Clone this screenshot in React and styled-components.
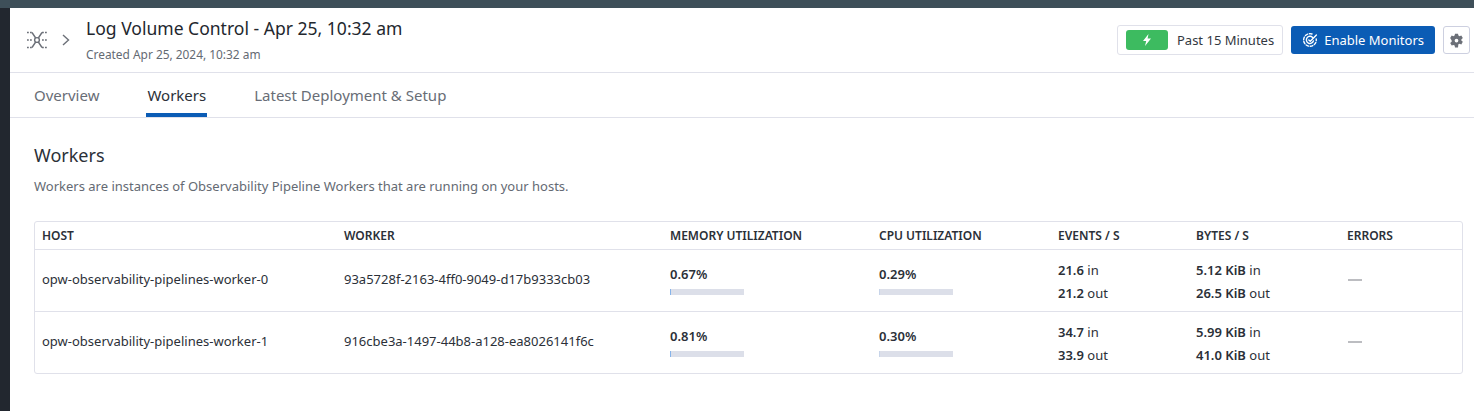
import React from 'react';
import styled, { createGlobalStyle } from 'styled-components';

const GlobalStyle = createGlobalStyle`
   html, body {
      margin: 0;
      padding: 0;
      height: 100%;
      background: #fff;
   }
   body {
      font-family: "Noto Sans", "Open Sans", sans-serif;
      color: #2b3038;
      overflow: hidden;
   }
`;

const Shell = styled.div`
   display: flex;
   flex-direction: column;
   height: 411px;
   border-top: 8px solid #3e4f59;
   box-sizing: border-box;
`;

const Body = styled.div`
   display: flex;
   flex: 1;
`;

const Rail = styled.div`
   width: 10px;
   background: #22272f;
`;

const Main = styled.div`
   flex: 1;
   display: flex;
   flex-direction: column;
   min-width: 0;
`;

const Header = styled.header`
   display: flex;
   align-items: center;
   height: 65px;
   box-sizing: border-box;
   padding: 0 4px 0 16px;
   border-bottom: 1px solid #e0e1ea;
`;

const Crumb = styled.div`
   display: flex;
   align-items: center;
   gap: 14px;
   margin-right: 16px;
   color: #6c7078;
`;

const Titles = styled.div`
   flex: 1;
   padding-bottom: 4px;
`;

const Title = styled.h1`
   margin: 0;
   font-size: 17.55px;
   line-height: 26px;
   font-weight: 400;
   color: #23272e;
`;

const Sub = styled.div`
   margin-top: 5px;
   font-size: 11.9px;
   line-height: 16px;
   color: #646a73;
`;

const Actions = styled.div`
   display: flex;
   align-items: center;
`;

const TimePicker = styled.div`
   display: flex;
   align-items: center;
   height: 30px;
   box-sizing: border-box;
   padding: 0 8px;
   border: 1px solid #e0e1ea;
   border-radius: 3px;
   font-size: 13px;
   color: #33383f;
`;

const LivePill = styled.div`
   display: flex;
   align-items: center;
   justify-content: center;
   width: 42px;
   height: 20px;
   margin-right: 9px;
   border-radius: 3px;
   background: #3dbb60;
`;

const PrimaryButton = styled.button`
   display: flex;
   align-items: center;
   gap: 6px;
   height: 28px;
   margin-left: 8px;
   padding: 0 11px;
   border: 0;
   border-radius: 3px;
   background: #0b5cb5;
   color: #fff;
   font: inherit;
   font-size: 13px;
`;

const IconButton = styled.button`
   display: flex;
   align-items: center;
   justify-content: center;
   width: 27px;
   height: 28px;
   margin-left: 8px;
   padding: 0;
   border: 1px solid #cdd0e0;
   border-radius: 3px;
   background: #fff;
   color: #6c7078;
`;

const Tabs = styled.nav`
   display: flex;
   height: 45px;
   box-sizing: border-box;
   padding-left: 23px;
   gap: 46px;
   border-bottom: 1px solid #e0e1ea;
`;

const Tab = styled.div`
   box-sizing: border-box;
   height: 44px;
   padding: 0 1px;
   font-size: 15px;
   line-height: 44px;
   color: ${props => (props.$active ? '#2b3038' : '#686d76')};
   border-bottom: 4px solid ${props => (props.$active ? '#0b5cb5' : 'transparent')};
`;

const Content = styled.section`
   padding: 26px 11px 0 24px;
`;

const Heading = styled.h2`
   margin: 0;
   font-size: 18px;
   line-height: 22px;
   font-weight: 400;
   color: #2b3038;
`;

const Blurb = styled.p`
   margin: 12px 0 0;
   font-size: 13px;
   line-height: 17px;
   color: #646a73;
`;

const Table = styled.div`
   display: grid;
   grid-template-columns: 302px 326px 209px 179px 138px 151px 1fr;
   margin-top: 26px;
   border: 1px solid #e0e1ea;
   border-radius: 3px;
`;

const HeadCell = styled.div`
   display: flex;
   align-items: center;
   height: 27px;
   padding-left: 7px;
   border-bottom: 1px solid #e0e1ea;
   font-size: 12px;
   font-weight: 600;
   color: #2b3038;
`;

const Cell = styled.div`
   display: flex;
   flex-direction: column;
   justify-content: center;
   box-sizing: border-box;
   height: ${props => (props.$last ? '61px' : '62px')};
   padding: ${props => props.$pad || '0'} 0 ${props => props.$padBottom || '0'} 7px;
   font-size: 13px;
   color: #2b3038;
   border-bottom: ${props => (props.$last ? '0' : '1px solid #e0e1ea')};
`;

const Percent = styled.div`
   font-size: 13px;
   line-height: 17px;
   font-weight: 600;
`;

const Track = styled.div`
   width: 74px;
   height: 6px;
   margin-top: 6px;
   background: #dcdfe9;
`;

const Fill = styled.div`
   height: 100%;
   background: #86b4ea;
`;

const Rate = styled.div`
   font-size: 13px;
   line-height: 23px;

   b {
      font-weight: 600;
   }
`;

const Dash = styled.div`
   width: 14px;
   height: 2px;
   margin-left: 1px;
   background: #bcbdc1;
`;

function PipelineIcon() {
   return (
      <svg width="22" height="20" viewBox="0 0 22 20" fill="none" stroke="currentColor" strokeWidth="1.6">
         <path d="M1 2.500h5M16 2.500h5M1 10h5M16 10h5M1 17.500h5M16 17.500h5" strokeDasharray="1.800 1.200" />
         <path d="M6 2.500L16 17.500M16 2.500L6 17.500" strokeWidth="1.400" />
         <circle cx="11" cy="10" r="2.400" fill="#fff" strokeWidth="1.400" />
      </svg>
   );
}

function Chevron() {
   return (
      <svg width="8" height="12" viewBox="0 0 8 12" fill="none" stroke="currentColor" strokeWidth="1.4">
         <path d="M1 1l5.500 5L1 11" />
      </svg>
   );
}

function Bolt() {
   return (
      <svg width="10" height="12" viewBox="0 0 10 12" fill="#fff">
         <path d="M6.500 0L1 7h3.200L3 12l6-7.500H5.600z" />
      </svg>
   );
}

function MonitorIcon() {
   return (
      <svg width="16" height="16" viewBox="0 0 16 16" fill="none" stroke="#fff" strokeWidth="1.4" strokeLinecap="round">
         <path d="M10 2a6.300 6.300 0 1 0 4.200 5" strokeDasharray="2.600 1.800" />
         <path d="M10.600 5.400A3.600 3.600 0 1 0 11.400 9" />
         <path d="M6.800 8l1.500 1.300L14.400 3" />
      </svg>
   );
}

function Gear() {
   return (
      <svg width="15" height="15" viewBox="0 0 24 24" fill="currentColor">
         <path fillRule="evenodd" d="M14.400 1l.6 3.100c.6.2 1.200.5 1.700.9l3-1 2.400 4.100-2.400 2.100c.1.6.1 1.200 0 1.800l2.400 2.100-2.400 4.100-3-1c-.5.4-1.100.7-1.700.9L14.400 23H9.600L9 19.900c-.6-.2-1.200-.5-1.700-.9l-3 1L1.900 15.900l2.400-2.100c-.1-.6-.1-1.200 0-1.800L1.900 8.100 4.300 4l3 1c.5-.4 1.100-.7 1.700-.9L9.600 1zM12 9a3 3 0 1 0 0 6 3 3 0 0 0 0-6z" />
      </svg>
   );
}

const columns = ['HOST', 'WORKER', 'MEMORY UTILIZATION', 'CPU UTILIZATION', 'EVENTS / S', 'BYTES / S', 'ERRORS'];

const workers = [
   {
      host: 'opw-observability-pipelines-worker-0',
      id: '93a5728f-2163-4ff0-9049-d17b9333cb03',
      memory: '0.67',
      cpu: '0.29',
      events: ['21.6', '21.2'],
      bytes: ['5.12 KiB', '26.5 KiB'],
   },
   {
      host: 'opw-observability-pipelines-worker-1',
      id: '916cbe3a-1497-44b8-a128-ea8026141f6c',
      memory: '0.81',
      cpu: '0.30',
      events: ['34.7', '33.9'],
      bytes: ['5.99 KiB', '41.0 KiB'],
   },
];

function Usage({ value }) {
   // under half a percent the fill is only a faint sliver
   const percent = Number(value);
   const visible = percent >= 0.5;
   return (
      <>
         <Percent>{value}%</Percent>
         <Track>
            <Fill style={{ width: `${Math.max(percent, 1.4)}%`, opacity: visible ? 1 : 0.25 }} />
         </Track>
      </>
   );
}

function InOut({ values }) {
   return (
      <>
         <Rate><b>{values[0]}</b> in</Rate>
         <Rate><b>{values[1]}</b> out</Rate>
      </>
   );
}

export default function App() {
   return (
      <>
         <GlobalStyle />
         <Shell>
            <Body>
               <Rail />
               <Main>
                  <Header>
                     <Crumb>
                        <PipelineIcon />
                        <Chevron />
                     </Crumb>
                     <Titles>
                        <Title>Log Volume Control - Apr 25, 10:32 am</Title>
                        <Sub>Created Apr 25, 2024, 10:32 am</Sub>
                     </Titles>
                     <Actions>
                        <TimePicker>
                           <LivePill><Bolt /></LivePill>
                           Past 15 Minutes
                        </TimePicker>
                        <PrimaryButton><MonitorIcon />Enable Monitors</PrimaryButton>
                        <IconButton><Gear /></IconButton>
                     </Actions>
                  </Header>
                  <Tabs>
                     <Tab>Overview</Tab>
                     <Tab $active>Workers</Tab>
                     <Tab>Latest Deployment &amp; Setup</Tab>
                  </Tabs>
                  <Content>
                     <Heading>Workers</Heading>
                     <Blurb>Workers are instances of Observability Pipeline Workers that are running on your hosts.</Blurb>
                     <Table>
                        {columns.map(name => <HeadCell key={name}>{name}</HeadCell>)}
                        {workers.map((w, i) => {
                           const last = i === workers.length - 1;
                           return (
                              <React.Fragment key={w.id}>
                                 <Cell $last={last} $padBottom="3px">{w.host}</Cell>
                                 <Cell $last={last} $padBottom="3px">{w.id}</Cell>
                                 <Cell $last={last}><Usage value={w.memory} /></Cell>
                                 <Cell $last={last}><Usage value={w.cpu} /></Cell>
                                 <Cell $last={last} $pad="2px"><InOut values={w.events} /></Cell>
                                 <Cell $last={last} $pad="2px"><InOut values={w.bytes} /></Cell>
                                 <Cell $last={last} $padBottom="1px"><Dash /></Cell>
                              </React.Fragment>
                           );
                        })}
                     </Table>
                  </Content>
               </Main>
            </Body>
         </Shell>
      </>
   );
}
